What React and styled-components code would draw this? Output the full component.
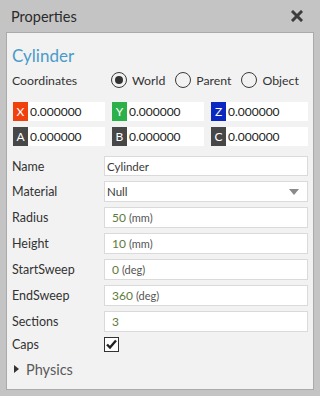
import React from "react";
import styled, { createGlobalStyle } from "styled-components";

const GlobalStyle = createGlobalStyle`
  html, body {
    margin: 0;
    padding: 0;
    background: #c4c4c4;
  }
  body {
    font-family: Lato, "Open Sans", sans-serif;
    color: #333;
  }
`;

const Window = styled.div`
  width: 320px;
  height: 396px;
  background: #c4c4c4;
  display: flex;
  flex-direction: column;
  box-sizing: border-box;
`;

const TitleBar = styled.div`
  height: 32px;
  display: flex;
  align-items: center;
  justify-content: space-between;
  padding: 0 17px 0 11px;
  box-sizing: border-box;
`;

const Title = styled.div`
  font-size: 14.5px;
  color: #2b2b2b;
`;

const Panel = styled.div`
  margin: 0 6px;
  height: 358px;
  box-sizing: border-box;
  border: 1px solid #aaaaaa;
  background: #f2f2f2;
  padding: 0 5px 0 5px;
  display: flex;
  flex-direction: column;
`;

const Heading = styled.div`
  margin-top: 10px;
  height: 26px;
  line-height: 26px;
  font-size: 17px;
  color: #4a9bca;
`;

const CoordRow = styled.div`
  height: 22px;
  display: flex;
  align-items: center;
  font-size: 12.3px;
`;

const CoordLabel = styled.div`
  flex: none;
  width: 99px;
`;

const RadioOption = styled.label`
  flex: none;
  display: flex;
  align-items: center;
  gap: 5px;
  margin-right: 10px;

  &:last-child {
    margin-right: 0;
  }
`;

const RadioCircle = styled.span`
  width: 16px;
  height: 16px;
  box-sizing: border-box;
  border: 1.5px solid #3a3a3a;
  border-radius: 50%;
  display: flex;
  align-items: center;
  justify-content: center;

  &::after {
    content: "";
    display: ${p => (p.$checked ? "block" : "none")};
    width: 8px;
    height: 8px;
    border-radius: 50%;
    background: #333;
  }
`;

const AxisGrid = styled.div`
  margin-top: 11px;
  display: grid;
  grid-template-columns: 92px 92px 97px;
  column-gap: 7px;
  row-gap: 6px;
  padding-left: 1px;
`;

const AxisField = styled.div`
  height: 19px;
  display: flex;
  background: #fff;
  font-size: 12px;
`;

const AxisBadge = styled.div`
  width: 15px;
  flex: none;
  background: ${p => p.$color};
  color: #fff;
  display: flex;
  align-items: center;
  justify-content: center;
  font-size: 12px;
`;

const AxisValue = styled.div`
  padding-left: 2px;
  display: flex;
  align-items: center;
  color: #222;
`;

const Form = styled.div`
  margin-top: 10px;
  display: flex;
  flex-direction: column;
  gap: 5px;
`;

const FieldRow = styled.div`
  display: flex;
  align-items: center;
  height: ${p => p.$h || 21}px;
`;

const FieldLabel = styled.div`
  flex: none;
  width: 92px;
  font-size: 12.5px;
  color: #333;
`;

const Input = styled.div`
  flex: 1;
  height: 100%;
  box-sizing: border-box;
  background: #fff;
  border: 1px solid #dadada;
  display: flex;
  align-items: center;
  padding-left: ${p => (p.$unit ? 7 : 2)}px;
  padding-right: 8px;
  font-size: 11.5px;
  color: #3a3a3a;
`;

const Num = styled.span`
  color: #5e7a3c;
  font-size: 12px;
`;

const Unit = styled.span`
  color: #555;
  margin-left: 3px;
  font-size: 11px;
`;

const Caret = styled.span`
  margin-left: auto;
  width: 0;
  height: 0;
  border-left: 5px solid transparent;
  border-right: 5px solid transparent;
  border-top: 6px solid #8a8a8a;
`;

const Checkbox = styled.span`
  width: 15px;
  height: 15px;
  box-sizing: border-box;
  border: 1px solid #333;
  background: #fff;
  display: flex;
  align-items: center;
  justify-content: center;
`;

const Section = styled.div`
  margin-top: 5px;
  height: 24px;
  display: flex;
  align-items: center;
  gap: 7px;
  font-size: 14.5px;
  color: #5a5a5a;
  padding-left: 2px;
`;

const Arrow = styled.span`
  width: 0;
  height: 0;
  border-top: 4px solid transparent;
  border-bottom: 4px solid transparent;
  border-left: 5px solid #333;
`;

function CloseIcon() {
  return (
    <svg width="12" height="12" viewBox="0 0 12 12">
      <path d="M2 2 L10 10 M10 2 L2 10" stroke="#3c3c3c" strokeWidth="3" strokeLinecap="square" />
    </svg>
  );
}

function CheckIcon() {
  return (
    <svg width="13" height="13" viewBox="0 0 13 13">
      <path d="M2 6.5 L5 9.5 L11 2.5" fill="none" stroke="#222" strokeWidth="2.4" />
    </svg>
  );
}

const axes = [
  { l: "X", c: "#f0400c" },
  { l: "Y", c: "#2cb14a" },
  { l: "Z", c: "#0a28c0" },
  { l: "A", c: "#474747" },
  { l: "B", c: "#474747" },
  { l: "C", c: "#474747" },
];

const numeric = [
  { label: "Radius", v: "50", u: "(mm)" },
  { label: "Height", v: "10", u: "(mm)" },
  { label: "StartSweep", v: "0", u: "(deg)" },
  { label: "EndSweep", v: "360", u: "(deg)" },
  { label: "Sections", v: "3" },
];

export default function App() {
  return (
    <Window>
      <GlobalStyle />
      <TitleBar>
        <Title>Properties</Title>
        <CloseIcon />
      </TitleBar>
      <Panel>
        <Heading>Cylinder</Heading>
        <CoordRow>
          <CoordLabel>Coordinates</CoordLabel>
          <RadioOption><RadioCircle $checked />World</RadioOption>
          <RadioOption><RadioCircle />Parent</RadioOption>
          <RadioOption><RadioCircle />Object</RadioOption>
        </CoordRow>
        <AxisGrid>
          {axes.map(a => (
            <AxisField key={a.l}>
              <AxisBadge $color={a.c}>{a.l}</AxisBadge>
              <AxisValue>0.000000</AxisValue>
            </AxisField>
          ))}
        </AxisGrid>
        <Form>
          <FieldRow $h={20}>
            <FieldLabel>Name</FieldLabel>
            <Input>Cylinder</Input>
          </FieldRow>
          <FieldRow>
            <FieldLabel>Material</FieldLabel>
            <Input>Null<Caret /></Input>
          </FieldRow>
          {numeric.map(f => (
            <FieldRow key={f.label}>
              <FieldLabel>{f.label}</FieldLabel>
              <Input $unit>
                <Num>{f.v}</Num>
                {f.u && <Unit>{f.u}</Unit>}
              </Input>
            </FieldRow>
          ))}
          <FieldRow $h={15}>
            <FieldLabel>Caps</FieldLabel>
            <Checkbox><CheckIcon /></Checkbox>
          </FieldRow>
        </Form>
        <Section><Arrow />Physics</Section>
      </Panel>
    </Window>
  );
}
